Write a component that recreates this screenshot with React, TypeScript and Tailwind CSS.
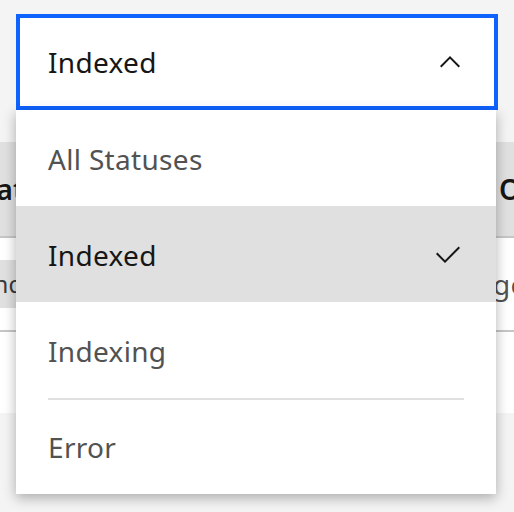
import React from "react";

const options = ["All Statuses", "Indexed", "Indexing", "Error"];

const ChevronUp = () => (
  <svg width="32" height="32" viewBox="0 0 32 32" fill="#161616">
    <path d="M16 10L26 20 24.6 21.4 16 12.8 7.4 21.4 6 20 16 10z" />
  </svg>
);

const Checkmark = () => (
  <svg width="32" height="32" viewBox="0 0 32 32" fill="#161616">
    <path d="M13 24L4 15 5.414 13.586 13 21.171 26.586 7.586 28 9 13 24z" />
  </svg>
);

export default function App() {
  const selected = "Indexed";
  const selectedIndex = options.indexOf(selected);

  return (
    <div
      className="relative w-[514px] h-[512px] overflow-hidden bg-[#f4f4f4] text-[#161616] tracking-[0.32px]"
      style={{ fontFamily: '"Noto Sans", "Open Sans", sans-serif' }}
    >
      {/* Dropdown field */}
      <div className="pt-[14px] px-[16px]">
        <button className="w-full h-[96px] flex items-center justify-between pl-[28px] pr-[28px] bg-white border-4 border-[#0f62fe] text-[28px] text-left">
          <span>{selected}</span>
          <ChevronUp />
        </button>
      </div>

      {/* Table behind the menu */}
      <div className="mt-[32px]">
        <div className="h-[96px] flex items-center bg-[#e0e0e0] border-b-2 border-[#c6c6c6] text-[28px] font-semibold whitespace-nowrap">
          <div className="w-[496px] shrink-0">
            <span className="-ml-[31px]">Status</span>
          </div>
          <span className="pl-[3px]">Owner</span>
        </div>
        <div className="h-[94px] flex items-center bg-white border-b-2 border-[#c6c6c6] text-[28px] whitespace-nowrap">
          <div className="w-[496px] shrink-0 flex">
            <span className="-ml-[31px] h-[48px] px-[16px] flex items-center rounded-full bg-[#e0e0e0] text-[24px] text-[#393939]">
              Indexed
            </span>
          </div>
          <span className="-ml-[3px] text-[#525252]">google</span>
        </div>
        <div className="h-[81px] bg-white" />
      </div>

      {/* Open menu */}
      <ul className="absolute left-[16px] top-[110px] w-[480px] bg-white shadow-[0_4px_12px_rgba(0,0,0,0.3)]">
        {options.map((opt, i) => {
          const isSelected = opt === selected;
          const hideBorder = i === 0 || isSelected || i === selectedIndex + 1;
          return (
            <li
              key={opt}
              className={`h-[96px] ${isSelected ? "bg-[#e0e0e0]" : "bg-white"}`}
            >
              <div
                className={`mx-[32px] h-full flex items-center justify-between text-[28px] border-t-2 ${
                  hideBorder ? "border-transparent" : "border-[#e0e0e0]"
                } ${isSelected ? "text-[#161616]" : "text-[#525252]"}`}
              >
                <span>{opt}</span>
                {isSelected && <Checkmark />}
              </div>
            </li>
          );
        })}
      </ul>
    </div>
  );
}
